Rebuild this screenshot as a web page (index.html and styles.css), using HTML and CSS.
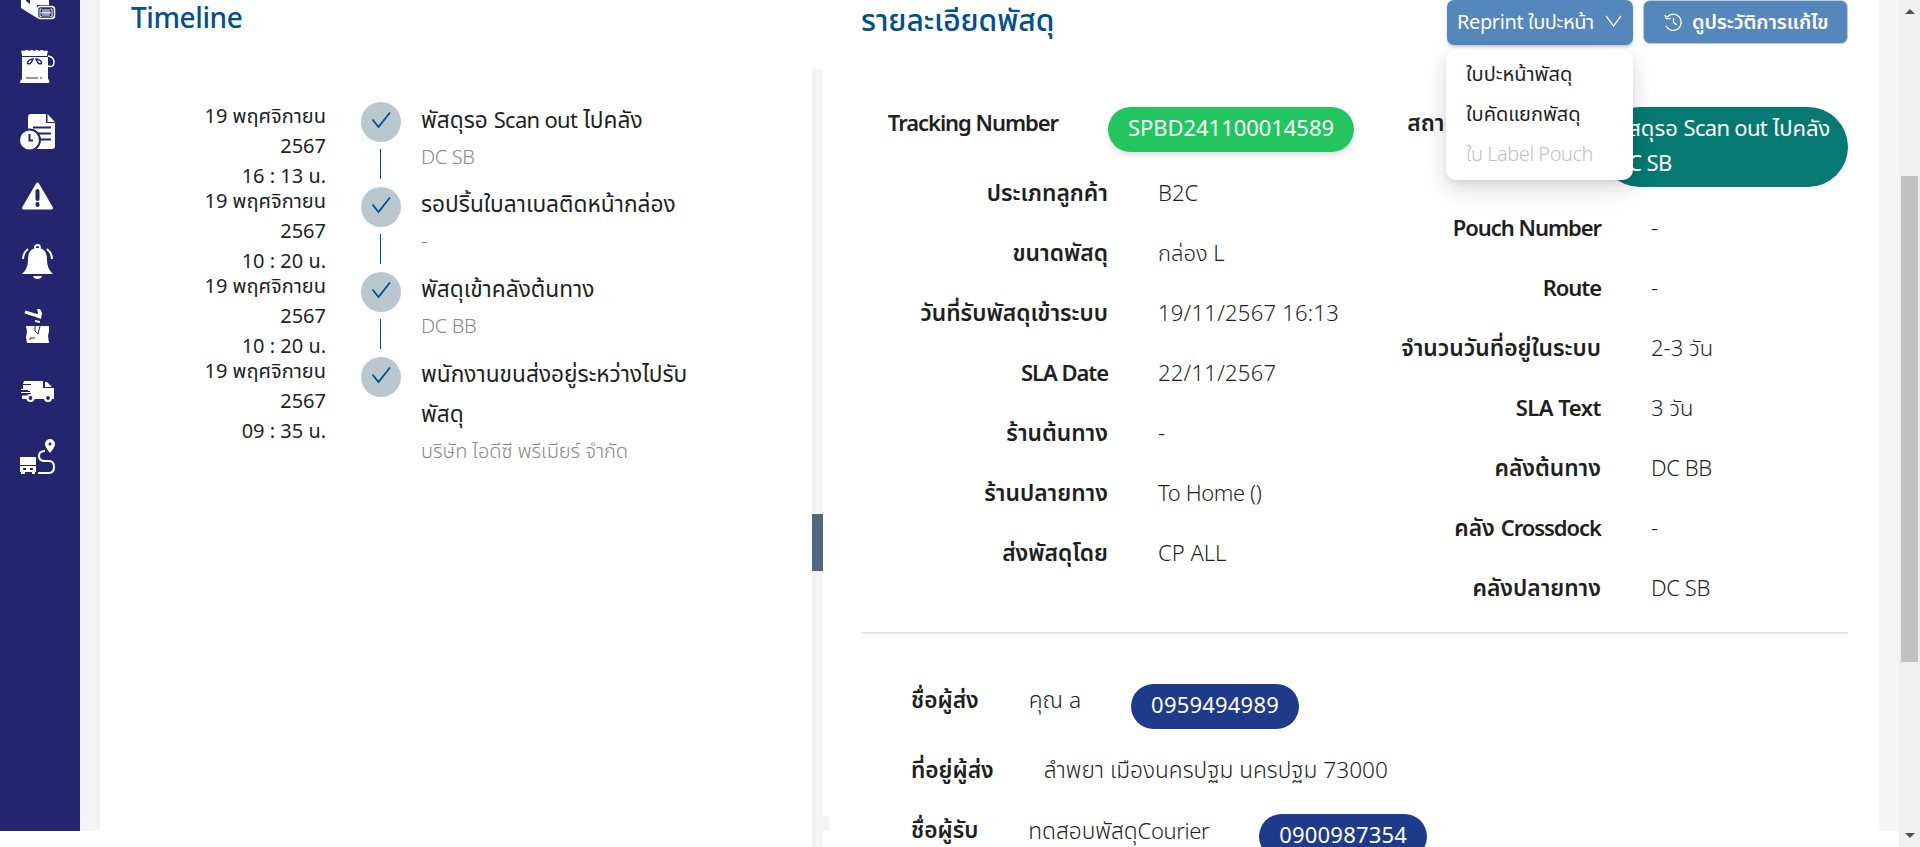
FILE: index.html
```html
<!DOCTYPE html>
<html lang="th">
<head>
<meta charset="utf-8">
<title>Timeline</title>
<link rel="stylesheet" href="styles.css">
</head>
<body>
<div class="app">
  <nav class="sidebar">
    <svg class="ico" viewBox="0 0 36 36"><path fill="#fff" d="M1 0h28v21H17v13L1 24z"/><path fill="#23266f" d="M6 17l4 3v-5H6z"/><rect x="17.500" y="22.500" width="17" height="12" rx="3" fill="#23266f" stroke="#fff" stroke-width="1.500"/><path d="M21.500 25H20v7.500h1.500M30.500 25H32v7.500h-1.500M23 25v7.500M25 25v7.500M27 25v7.500M29 25v7.500M21 28.800h10" stroke="#fff" stroke-width="1" fill="none"/></svg>
    <svg class="ico" viewBox="0 0 36 36"><path fill="#fff" d="M1 2q2-1 3 0 3-2 5 0 3-2 5 0 3-2 5 0 3-2 5 0 2-1 4 0-1 3-1 5H2Q2 4 1 2zM2 8h26v22q2 1 1 4H0q0-3 2-4z"/><path d="M28 7q6 1 6 6 0 6-6 4" fill="none" stroke="#fff" stroke-width="1.500"/><path d="M13 10q-6 1-5.500 4.500Q11 16 13 10zM16 10q6 1 5.500 4.500Q18 16 16 10z" fill="#fff" stroke="#23266f" stroke-width="1.400"/><path d="M6 29h12M20 29h2" stroke="#23266f" stroke-width="1.200"/></svg>
    <svg class="ico" viewBox="0 0 36 36"><path fill="#fff" d="M8 3q0-3 3-3h15v9h9v23q0 3-3 3H8zM27.500 0l7.500 8h-7.500z"/><path d="M13 13.500h18M18 19.500h13M20 25.500h11" stroke="#23266f" stroke-width="2"/><circle cx="9.500" cy="26" r="10.500" fill="#fff" stroke="#23266f" stroke-width="2"/><path d="M9.500 20v6.500H13" fill="none" stroke="#23266f" stroke-width="2"/></svg>
    <svg class="ico" viewBox="0 0 36 36"><path fill="#fff" stroke="#fff" stroke-width="3" stroke-linejoin="round" d="M17.500 5L31.500 29h-28z"/><path d="M17.500 12v8M17.500 25v1" stroke="#23266f" stroke-width="4" stroke-linecap="round"/></svg>
    <svg class="ico" viewBox="0 0 36 36"><path fill="#fff" d="M17.500 4C9 4 8 11 8 16q0 9-6 14h31q-6-5-6-14c0-5-1-12-9.500-12zM13 32h9q-1 3-4.500 3T13 32z"/><circle cx="17.500" cy="3.500" r="2.500" fill="none" stroke="#fff" stroke-width="1.800"/><path d="M8 5q-5 4-5 10M27 5q5 4 5 10" fill="none" stroke="#fff" stroke-width="2"/></svg>
    <svg class="ico" viewBox="0 0 36 36"><path d="M5 3l13 4" stroke="#fff" stroke-width="3"/><path fill="#fff" d="M17 0h3l2 4-1 6-5-2 2-4zM15 11l5 1v2l-5-1zM6 17h23v5l-1 5 1 7H7l-1-6 1-5z"/><path d="M15 17v5l3 3 2-8M10 31v-2h5" fill="none" stroke="#23266f" stroke-width="1"/></svg>
    <svg class="ico" viewBox="0 0 36 36"><path fill="#fff" d="M4 7h19v7h11v11H2v-4h9v-2H1v-1h7v-2H1v-1h2v-4h8v-1H3zM25 8h2l5 5h-7z"/><path d="M1 17.500h9M1 21h11" stroke="#23266f"/><g fill="#23266f" stroke="#fff" stroke-width="2.200"><circle cx="10.500" cy="24" r="3"/><circle cx="28" cy="24" r="3"/></g></svg>
    <svg class="ico" viewBox="0 0 36 36"><path fill="#fff" d="M0 18h16v8H0zM0 27h16v6h-1v2h-3v-2H5v2H1v-2H0zM30 14Q25 8 25 5a5 5 0 0 1 10 0q0 3-5 9z"/><circle cx="30" cy="5" r="1.500" fill="#23266f"/><path d="M3 30h3M10 30h3" stroke="#23266f" stroke-width="2"/><path d="M25 12q-6 0-6 5 0 5 6 5h4q5 0 5 6t-5 6H18" fill="none" stroke="#fff" stroke-width="2"/></svg>
  </nav>
  <main class="content">
    <section class="timeline">
      <h2 class="heading latin">Timeline</h2>
      <ol class="steps">
        <li class="step"><div class="date">19 พฤศจิกายน 2567<br>16 : 13 น.</div><div class="mark"><svg class="dot" viewBox="0 0 40 40"><path d="M11.500 17.500l6 7.500L29 10.500"/></svg><i class="bar"></i></div><div class="info"><p class="what">พัสดุรอ <span class="latin">Scan out</span> ไปคลัง</p><p class="where latin">DC SB</p></div></li>
        <li class="step"><div class="date">19 พฤศจิกายน 2567<br>10 : 20 น.</div><div class="mark"><svg class="dot" viewBox="0 0 40 40"><path d="M11.500 17.500l6 7.500L29 10.500"/></svg><i class="bar"></i></div><div class="info"><p class="what">รอปริ้นใบลาเบลติดหน้ากล่อง</p><p class="where">-</p></div></li>
        <li class="step"><div class="date">19 พฤศจิกายน 2567<br>10 : 20 น.</div><div class="mark"><svg class="dot" viewBox="0 0 40 40"><path d="M11.500 17.500l6 7.500L29 10.500"/></svg><i class="bar"></i></div><div class="info"><p class="what">พัสดุเข้าคลังต้นทาง</p><p class="where latin">DC BB</p></div></li>
        <li class="step"><div class="date">19 พฤศจิกายน 2567<br>09 : 35 น.</div><div class="mark"><svg class="dot" viewBox="0 0 40 40"><path d="M11.500 17.500l6 7.500L29 10.500"/></svg></div><div class="info"><p class="what">พนักงานขนส่งอยู่ระหว่างไปรับ<br>พัสดุ</p><p class="where">บริษัท ไอดีซี พรีเมียร์ จำกัด</p></div></li>
      </ol>
    </section>
    <div class="splitter"><div class="grip"></div><i class="nub"></i></div>
    <section class="detail">
      <header class="bar-top">
        <h2 class="heading">รายละเอียดพัสดุ</h2>
        <div class="actions">
          <div class="btn reprint"><span>Reprint ใบปะหน้า</span><svg class="chev" viewBox="0 0 18 14"><path d="M1 1l8 11 8-11"/></svg>
            <ul class="menu"><li>ใบปะหน้าพัสดุ</li><li>ใบคัดแยกพัสดุ</li><li class="off">ใบ Label Pouch</li></ul>
          </div>
          <div class="btn history"><svg class="clock" viewBox="0 0 20 20"><path d="M3 5a8.500 8.500 0 1 1-1 9M1 2.500l1.500 4H7M10 5.500v5l3.500 2.500"/></svg><b>ดูประวัติการแก้ไข</b></div>
        </div>
      </header>
      <div class="facts">
        <dl class="col left">
          <div class="row first"><dt class="latin">Tracking Number</dt><dd class="pill green">SPBD241100014589</dd></div>
          <div class="row"><dt>ประเภทลูกค้า</dt><dd>B2C</dd></div>
          <div class="row"><dt>ขนาดพัสดุ</dt><dd>กล่อง L</dd></div>
          <div class="row"><dt>วันที่รับพัสดุเข้าระบบ</dt><dd class="num">19/11/2567 16:13</dd></div>
          <div class="row"><dt class="latin">SLA Date</dt><dd class="num">22/11/2567</dd></div>
          <div class="row"><dt>ร้านต้นทาง</dt><dd>-</dd></div>
          <div class="row"><dt>ร้านปลายทาง</dt><dd class="latin">To Home ()</dd></div>
          <div class="row"><dt>ส่งพัสดุโดย</dt><dd>CP ALL</dd></div>
        </dl>
        <dl class="col right">
          <div class="row first"><dt>สถานะพัสดุ</dt><dd class="pill teal">พัสดุรอ <span class="latin">Scan out</span> ไปคลัง<br><span class="latin">DC SB</span></dd></div>
          <div class="row"><dt class="latin">Pouch Number</dt><dd>-</dd></div>
          <div class="row"><dt class="latin">Route</dt><dd>-</dd></div>
          <div class="row"><dt>จำนวนวันที่อยู่ในระบบ</dt><dd>2-3 วัน</dd></div>
          <div class="row"><dt class="latin wide">SLA Text</dt><dd>3 วัน</dd></div>
          <div class="row"><dt>คลังต้นทาง</dt><dd class="latin">DC BB</dd></div>
          <div class="row"><dt>คลัง <span class="latin">Crossdock</span></dt><dd>-</dd></div>
          <div class="row"><dt>คลังปลายทาง</dt><dd class="latin">DC SB</dd></div>
        </dl>
      </div>
      <div class="people">
        <div class="person"><b>ชื่อผู้ส่ง</b><span>คุณ a</span><span class="pill navy">0959494989</span></div>
        <div class="person address"><b>ที่อยู่ผู้ส่ง</b><span>ลำพยา เมืองนครปฐม นครปฐม 73000</span></div>
        <div class="person"><b>ชื่อผู้รับ</b><span>ทดสอบพัสดุ<span class="latin">Courier</span></span><span class="pill navy">0900987354</span></div>
      </div>
    </section>
  </main>
  <div class="gutter"></div>
  <div class="scroll"><i class="up"></i><i class="thumb"></i><i class="down"></i></div>
</div>
</body>
</html>
```
FILE: styles.css
```css
* { box-sizing: border-box; margin: 0; padding: 0; }
body { font: 350 22px/40px "Noto Sans", "Noto Sans Thai", sans-serif; color: #1f1f1f; background: #fff; overflow: hidden; }
.app { display: flex; height: 847px; overflow: hidden; }
.sidebar { width: 80px; height: 831px; background: #23266f; display: flex; flex-direction: column; align-items: center; gap: 29px; padding-right: 4px; flex: none; overflow: hidden; }
.ico { width: 36px; height: 36px; flex: none; }
.ico:first-child { margin-top: -16px; }
.content { flex: 1; display: flex; min-width: 0; }
.content::before { content: ""; width: 20px; height: 831px; background: #f4f4f4; flex: none; }
.gutter { width: 20px; height: 831px; background: #f4f4f4; }
.scroll { width: 21px; background: #f0f0f0; display: flex; flex-direction: column; align-items: center; }
.up { margin-top: 9px; border: 5px solid transparent; border-top: 0; border-bottom-color: #505050; }
.thumb { width: 17px; height: 486px; background: #c1c1c1; margin-top: 162px; }
.down { margin-top: 171px; border: 5px solid transparent; border-bottom: 0; border-top-color: #505050; }
.latin { font-size: 22px; letter-spacing: -0.4px; }
.num { letter-spacing: 0.25px; }
.heading { font-size: 30px; font-weight: 500; line-height: 40px; color: #00508f; white-space: nowrap; }
.timeline { width: 712px; padding-left: 31px; flex: none; }
.timeline .heading { font-size: 28px; height: 38px; line-height: 35px; }
.steps { list-style: none; padding-top: 61px; }
.step { display: flex; height: 85px; }
.date { width: 195px; padding-left: 60px; font-size: 20px; font-weight: 400; line-height: 30px; text-align: right; margin-top: 2px; }
.mark { width: 40px; margin: 3px 20px 0 35px; display: flex; flex-direction: column; gap: 7px; }
.dot { width: 40px; height: 40px; border-radius: 50%; background: #b9c8cf; flex: none; }
.dot path, .chev path, .clock path { fill: none; stroke: #00508f; stroke-width: 1.8; }
.bar { width: 1px; height: 30px; background: #00508f; margin-left: 19px; }
.info { white-space: nowrap; font-weight: 400; }
.what { font-size: 22.7px; }
.what .latin, .teal .latin { letter-spacing: -0.7px; }
.where { font-size: 20px; line-height: 33px; color: #888; font-weight: 350; }
.splitter { position: relative; width: 11px; margin-top: 69px; background: #f4f4f4; padding-top: 445px; flex: none; }
.grip { height: 57px; background: #4f6783; }
.nub { position: absolute; left: 11px; bottom: 16px; width: 6px; height: 15px; background: #f4f4f4; }
.detail { flex: 1; padding: 0 31px 0 38px; min-width: 0; }
.bar-top { display: flex; justify-content: space-between; height: 107px; }
.actions { display: flex; gap: 10px; }
.btn { position: relative; height: 45px; border-radius: 7px; background: #5586bc; color: #fff; display: flex; align-items: center; font-size: 20px; font-weight: 400; white-space: nowrap; box-shadow: 0 2px 3px #0003; }
.reprint { width: 186px; padding: 0 11px 2px 10px; justify-content: space-between; letter-spacing: -0.4px; }
.history { width: 205px; height: 44px; border: 1px solid #c5cbd3; padding-left: 20px; gap: 9px; box-shadow: none; }
.chev { width: 17px; height: 13px; }
.clock { width: 19px; height: 20px; }
.chev path, .clock path { stroke: #fff; stroke-width: 1.4; }
.btn b { font-weight: 600; letter-spacing: -0.15px; }
.menu { position: absolute; z-index: 2; left: -1px; top: 50px; width: 187px; height: 130px; padding: 4px 20px; list-style: none; background: #fff; border-radius: 10px; color: #1f1f1f; letter-spacing: 0; box-shadow: 0 8px 20px #0000001c, 0 4px 8px -4px #0002, 0 10px 35px #0000000d; }
.off { color: #bfbfbf; font-weight: 350; letter-spacing: -0.45px; }
.facts { display: flex; height: 525px; }
.left { width: 484px; }
.row { display: flex; height: 60px; align-items: center; gap: 50px; white-space: nowrap; }
dt { width: 247px; text-align: right; flex: none; font-size: 22.8px; padding-top: 1px; }
.row dd { margin-left: -1px; }
.row dd:not(.pill) { margin-left: 0; }
dt, .person b { font-weight: 600; }
dt.latin, dt .latin { font-size: 22px; letter-spacing: -1.05px; }
dt.latin { padding-top: 0; }
dt.wide { letter-spacing: -0.5px; }
.left .first { height: 55px; align-items: flex-start; }
.right .first { height: 90px; align-items: flex-start; }
.first dt { width: 197px; margin-top: -5px; }
.right dt { width: 256px; }
.right .first dt { width: 166px; }
.pill { border-radius: 40px; color: #fff; font-weight: 400; height: 45px; padding: 0 20px; line-height: 40px; }
.green { background: #22c55e; box-shadow: 0 4px 6px -1px #0002; }
.row .green { margin-left: 0; letter-spacing: -0.05px; }
.teal { background: #067a72; height: 80px; line-height: 35px; padding: 3px 15px 0 13px; width: 248px; flex: none; }
.row .teal { margin-left: 39px; }
.navy { background: #1e3a8a; letter-spacing: 0.2px; }
.people { border-top: 2px solid #e5e7eb; padding: 50px 0 0 50px; }
.person { display: flex; gap: 50px; height: 55px; white-space: nowrap; align-items: flex-start; }
.person > :not(.pill) { margin-top: -4px; font-size: 22.7px; }
.address { height: 75px; padding-top: 15px; }
```
